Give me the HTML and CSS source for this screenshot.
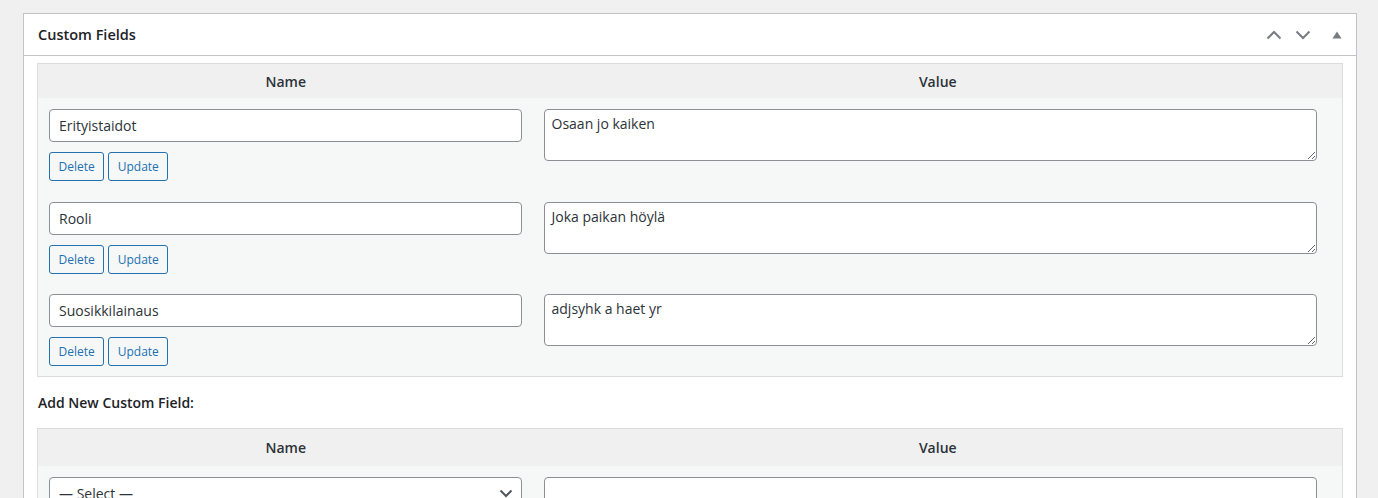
FILE: index.html
```html
<!DOCTYPE html>
<html lang="fi">
<head>
<meta charset="utf-8">
<title>Custom Fields</title>
<link rel="stylesheet" href="styles.css">
</head>
<body>
<div class="postbox">
  <div class="postbox-header">
    <h2 class="hndle">Custom Fields</h2>
    <div class="handle-actions">
      <button class="handle-btn" type="button" aria-label="Move up">
        <svg width="16" height="10" viewBox="0 0 16 10"><polyline points="1.5,8.5 8,2 14.5,8.5" fill="none" stroke="#787c82" stroke-width="2"/></svg>
      </button>
      <button class="handle-btn" type="button" aria-label="Move down">
        <svg width="16" height="10" viewBox="0 0 16 10"><polyline points="1.5,1.5 8,8 14.5,1.5" fill="none" stroke="#787c82" stroke-width="2"/></svg>
      </button>
      <button class="handle-btn toggle" type="button" aria-label="Toggle panel">
        <svg width="10" height="8" viewBox="0 0 10 8"><polygon points="5,0.5 9.5,7.5 0.5,7.5" fill="#787c82"/></svg>
      </button>
    </div>
  </div>
  <div class="inside">
    <table class="fields">
      <thead>
        <tr><th class="col-name">Name</th><th class="col-value">Value</th></tr>
      </thead>
      <tbody>
        <tr>
          <td class="cell-name">
            <input class="text-input" type="text" value="Erityistaidot">
            <div class="actions"><button class="small-btn" type="button">Delete</button><button class="small-btn" type="button">Update</button></div>
          </td>
          <td class="cell-value"><textarea class="value-area">Osaan jo kaiken</textarea></td>
        </tr>
        <tr>
          <td class="cell-name">
            <input class="text-input" type="text" value="Rooli">
            <div class="actions"><button class="small-btn" type="button">Delete</button><button class="small-btn" type="button">Update</button></div>
          </td>
          <td class="cell-value"><textarea class="value-area">Joka paikan höylä</textarea></td>
        </tr>
        <tr>
          <td class="cell-name">
            <input class="text-input" type="text" value="Suosikkilainaus">
            <div class="actions"><button class="small-btn" type="button">Delete</button><button class="small-btn" type="button">Update</button></div>
          </td>
          <td class="cell-value"><textarea class="value-area">adjsyhk a haet yr</textarea></td>
        </tr>
      </tbody>
    </table>
    <p class="add-title">Add New Custom Field:</p>
    <table class="fields fields-new">
      <thead>
        <tr><th class="col-name">Name</th><th class="col-value">Value</th></tr>
      </thead>
      <tbody>
        <tr>
          <td class="cell-name">
            <div class="select-box"><span>— Select —</span>
              <svg class="select-arrow" width="14" height="9" viewBox="0 0 14 9"><polyline points="1.5,1.5 7,7 12.5,1.5" fill="none" stroke="#50575e" stroke-width="2"/></svg>
            </div>
          </td>
          <td class="cell-value"><textarea class="value-area"></textarea></td>
        </tr>
      </tbody>
    </table>
  </div>
</div>
</body>
</html>
```

FILE: styles.css
```css
html, body {
  margin: 0;
  padding: 0;
  background: #f0f0f1;
  font-family: "Open Sans", "Noto Sans", Arial, sans-serif;
  color: #2c3338;
  font-size: 13px;
  overflow: hidden;
}

.postbox {
  margin: 13px 21px 0 23px;
  background: #fff;
  border: 1px solid #c3c4c7;
  height: 600px;
}

.postbox-header {
  display: flex;
  align-items: center;
  justify-content: space-between;
  height: 41px;
  border-bottom: 1px solid #c3c4c7;
}

.hndle {
  margin: 0;
  padding: 2px 0 0 14px;
  font-size: 14.5px;
  font-weight: 600;
  color: #1d2327;
  line-height: 1.4;
}

.handle-actions {
  display: flex;
  align-items: center;
  margin-right: 1px;
}

.handle-btn {
  width: 29px;
  height: 36px;
  border: 0;
  padding: 0;
  background: transparent;
  display: flex;
  align-items: center;
  justify-content: center;
}

.handle-btn.toggle {
  width: 36px;
  margin-left: 2px;
}

.inside {
  padding: 7px 13px 0 13px;
}

.fields {
  width: 100%;
  border: 1px solid #dcdcde;
  border-spacing: 0;
  background: #f6f7f7;
}

.fields th {
  background: #f0f0f1;
  font-size: 14px;
  font-weight: 600;
  color: #2c3338;
  height: 34px;
  padding: 0;
  text-align: center;
}

.fields-new th {
  height: 37px;
}

.col-name { width: 38%; }

.cell-name {
  vertical-align: top;
  padding: 11px 12px 9.5px 11px;
}

.cell-value {
  vertical-align: top;
  padding: 11px 25px 9.5px 10px;
}

.text-input {
  display: block;
  box-sizing: border-box;
  width: 100%;
  height: 33px;
  margin: 0;
  padding: 0 9px;
  border: 1px solid #8c8f94;
  border-radius: 4px;
  background: #fff;
  font-family: inherit;
  font-size: 14px;
  color: #2c3338;
}

.actions {
  display: flex;
  gap: 4px;
  margin-top: 10px;
}

.small-btn {
  height: 29px;
  padding: 0 8.5px;
  border: 1px solid #2271b1;
  border-radius: 3px;
  background: #f6f7f7;
  color: #2271b1;
  font-family: inherit;
  font-size: 12px;
}

.value-area {
  display: block;
  box-sizing: border-box;
  width: 100%;
  height: 52px;
  margin: 0;
  padding: 4px 7px;
  border: 1px solid #8c8f94;
  border-radius: 4px;
  background: #fff;
  font-family: inherit;
  font-size: 14px;
  line-height: 20px;
  color: #2c3338;
}

.add-title {
  margin: 16px 0 15px 1px;
  font-size: 14px;
  font-weight: 600;
  line-height: 20px;
  color: #1d2327;
}

.select-box {
  box-sizing: border-box;
  height: 33px;
  display: flex;
  align-items: center;
  justify-content: space-between;
  padding: 0 8px 0 9px;
  border: 1px solid #8c8f94;
  border-radius: 4px;
  background: #fff;
  font-size: 14px;
  color: #2c3338;
}
```
